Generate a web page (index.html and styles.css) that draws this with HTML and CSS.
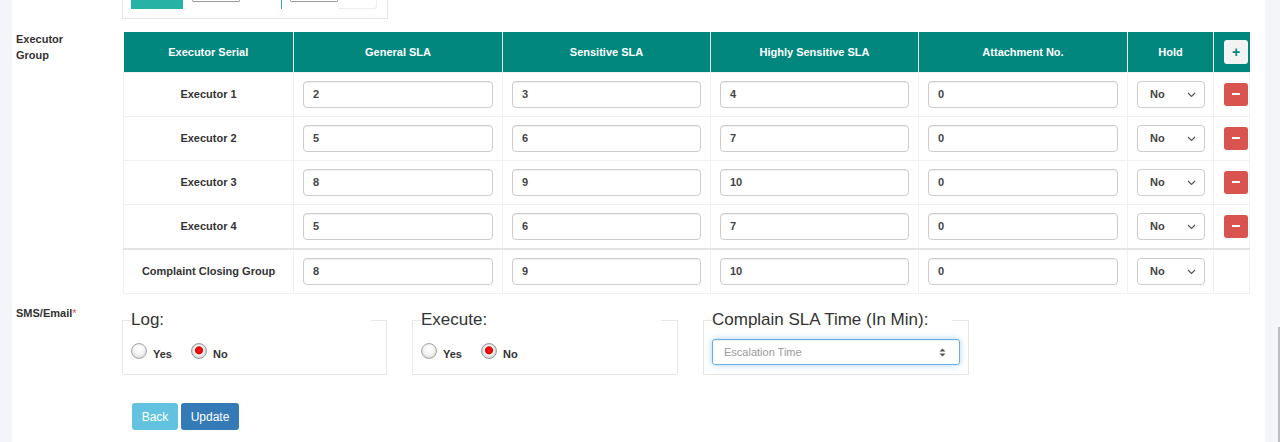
FILE: index.html
```html
<!DOCTYPE html>
<html>
<head>
<meta charset="utf-8">
<link rel="stylesheet" href="styles.css">
</head>
<body>
<div class="page">
  <div class="panel">
    <div class="prev-row">
      <div class="prev-box">
        <div class="tab-active"></div>
        <div class="mini-input"></div>
        <div class="vline"></div>
        <div class="mini-input second"></div>
        <div class="inner-edge"></div>
      </div>
    </div>

    <div class="form-row exec-row">
      <div class="row-label">Executor<br>Group</div>
      <table class="exec-table">
        <colgroup>
          <col class="c-serial"><col class="c-sla"><col class="c-sla2"><col class="c-sla2"><col class="c-sla"><col class="c-hold"><col class="c-act">
        </colgroup>
        <thead>
          <tr>
            <th>Executor Serial</th>
            <th>General SLA</th>
            <th>Sensitive SLA</th>
            <th>Highly Sensitive SLA</th>
            <th>Attachment No.</th>
            <th>Hold</th>
            <th class="act"><span class="btn-plus">+</span></th>
          </tr>
        </thead>
        <tbody>
          <tr>
            <td class="name">Executor 1</td>
            <td><div class="inp">2</div></td>
            <td><div class="inp">3</div></td>
            <td><div class="inp">4</div></td>
            <td><div class="inp">0</div></td>
            <td><div class="sel">No<svg class="chev" width="9" height="6" viewBox="0 0 9 6"><path d="M1 1l3.5 3.5L8 1" fill="none" stroke="#555" stroke-width="1.2"/></svg></div></td>
            <td class="act"><span class="btn-minus"></span></td>
          </tr>
          <tr>
            <td class="name">Executor 2</td>
            <td><div class="inp">5</div></td>
            <td><div class="inp">6</div></td>
            <td><div class="inp">7</div></td>
            <td><div class="inp">0</div></td>
            <td><div class="sel">No<svg class="chev" width="9" height="6" viewBox="0 0 9 6"><path d="M1 1l3.5 3.5L8 1" fill="none" stroke="#555" stroke-width="1.2"/></svg></div></td>
            <td class="act"><span class="btn-minus"></span></td>
          </tr>
          <tr>
            <td class="name">Executor 3</td>
            <td><div class="inp">8</div></td>
            <td><div class="inp">9</div></td>
            <td><div class="inp">10</div></td>
            <td><div class="inp">0</div></td>
            <td><div class="sel">No<svg class="chev" width="9" height="6" viewBox="0 0 9 6"><path d="M1 1l3.5 3.5L8 1" fill="none" stroke="#555" stroke-width="1.2"/></svg></div></td>
            <td class="act"><span class="btn-minus"></span></td>
          </tr>
          <tr>
            <td class="name">Executor 4</td>
            <td><div class="inp">5</div></td>
            <td><div class="inp">6</div></td>
            <td><div class="inp">7</div></td>
            <td><div class="inp">0</div></td>
            <td><div class="sel">No<svg class="chev" width="9" height="6" viewBox="0 0 9 6"><path d="M1 1l3.5 3.5L8 1" fill="none" stroke="#555" stroke-width="1.2"/></svg></div></td>
            <td class="act"><span class="btn-minus"></span></td>
          </tr>
          <tr class="closing">
            <td class="name">Complaint Closing Group</td>
            <td><div class="inp">8</div></td>
            <td><div class="inp">9</div></td>
            <td><div class="inp">10</div></td>
            <td><div class="inp">0</div></td>
            <td><div class="sel">No<svg class="chev" width="9" height="6" viewBox="0 0 9 6"><path d="M1 1l3.5 3.5L8 1" fill="none" stroke="#555" stroke-width="1.2"/></svg></div></td>
            <td class="act"></td>
          </tr>
        </tbody>
      </table>
    </div>

    <div class="form-row sms-row">
      <div class="row-label">SMS/Email<span class="req">*</span></div>
      <div class="field-grid">
        <fieldset class="fs">
          <legend>Log:</legend>
          <div class="radios">
            <span class="radio"></span><span class="rlabel">Yes</span>
            <span class="radio checked"></span><span class="rlabel">No</span>
          </div>
        </fieldset>
        <fieldset class="fs">
          <legend>Execute:</legend>
          <div class="radios">
            <span class="radio"></span><span class="rlabel">Yes</span>
            <span class="radio checked"></span><span class="rlabel">No</span>
          </div>
        </fieldset>
        <fieldset class="fs">
          <legend>Complain SLA Time (In Min):</legend>
          <div class="num-input">
            <span class="ph">Escalation Time</span>
            <svg class="spin" width="7" height="9" viewBox="0 0 7 9"><path d="M3.5 0.5L6.5 3.5H0.5Z M3.5 8.5L6.5 5.5H0.5Z" fill="#555"/></svg>
          </div>
        </fieldset>
      </div>
    </div>

    <div class="actions">
      <span class="btn btn-back">Back</span>
      <span class="btn btn-update">Update</span>
    </div>
  </div>
  <div class="scroll-thumb"></div>
</div>
</body>
</html>
```

FILE: styles.css
```css
* { box-sizing: border-box; }
html, body { margin: 0; padding: 0; }
body {
  font-family: "Liberation Sans", Arial, sans-serif;
  color: #333;
  background: #f4f5f8;
  width: 1280px;
  height: 442px;
  overflow: hidden;
}
.page {
  position: relative;
  height: 442px;
  padding-left: 12px;
}
.panel {
  width: 1253px;
  height: 442px;
  background: #fff;
}
.scroll-thumb {
  position: absolute;
  right: 0;
  top: 327px;
  width: 2px;
  height: 115px;
  background: #bdbdbd;
}

/* previous row remnant */
.prev-row { height: 18px; }
.prev-box {
  margin-left: 110px;
  width: 266px;
  height: 19px;
  border: 1px solid #e4e4e4;
  border-top: none;
  display: flex;
  align-items: flex-start;
  padding-left: 8px;
}
.tab-active { width: 52px; height: 9px; background: #26b2a5; }
.mini-input {
  margin-left: 9px;
  width: 48px;
  height: 2px;
  border: 1px solid #9a9a9a;
  border-top: none;
  border-radius: 0 0 3px 3px;
}
.vline { margin-left: 41px; width: 1px; height: 9px; background: #3aa89d; }
.mini-input.second { margin-left: 8px; }
.inner-edge {
  width: 39px;
  height: 9px;
  border-right: 1px solid #eee;
  border-bottom: 1px solid #eee;
  border-radius: 0 0 3px 0;
}

/* form rows */
.form-row { display: flex; align-items: flex-start; }
.row-label {
  width: 111px;
  flex: none;
  padding-left: 4px;
  font-size: 11px;
  font-weight: bold;
  line-height: 16px;
  color: #333;
}
.req { color: #d9534f; font-weight: normal; }

.exec-row { margin-top: 14px; }
.exec-row .row-label { padding-top: -1px; margin-top: -1px; }

.exec-table {
  width: 1126px;
  table-layout: fixed;
  border-collapse: collapse;
  font-size: 11px;
}
.c-serial { width: 170px; }
.c-sla { width: 209px; }
.c-sla2 { width: 208px; }
.c-hold { width: 86px; }
.c-act { width: 36px; }

.exec-table th {
  background: #01877e;
  color: #fff;
  font-weight: bold;
  height: 40px;
  padding: 0;
  text-align: center;
  border-left: 1px solid #e6f4f2;
}
.exec-table th:first-child { border-left: none; }
.exec-table th.act { text-align: left; padding-left: 10px; }
.btn-plus {
  display: flex;
  align-items: center;
  justify-content: center;
  width: 24px;
  height: 24px;
  background: #f2f3f3;
  border-radius: 3px;
  color: #01877e;
  font-size: 14px;
  font-weight: bold;
  line-height: 1;
}

.exec-table td {
  border: 1px solid #f1f1f1;
  padding: 8px 9px;
  height: 44px;
  vertical-align: middle;
}
.exec-table td.name {
  text-align: center;
  font-weight: bold;
  color: #333;
}
.exec-table td.act { padding-left: 10px; padding-right: 2px; }
.exec-table tr.closing td { border-top: 2px solid #e3e3e3; height: 45px; }

.inp {
  height: 27px;
  border: 1px solid #ccc;
  border-radius: 4px;
  padding: 0 9px;
  font-weight: bold;
  font-size: 11px;
  color: #444;
  line-height: 25px;
  box-shadow: inset 0 1px 1px rgba(0,0,0,.06);
}
.sel {
  width: 68px;
  height: 27px;
  border: 1px solid #ccc;
  border-radius: 4px;
  padding: 0 8px 0 12px;
  display: flex;
  align-items: center;
  justify-content: space-between;
  font-weight: bold;
  font-size: 11px;
  color: #444;
}
.chev { display: block; margin-top: 1px; }
.btn-minus {
  display: flex;
  align-items: center;
  justify-content: center;
  width: 24px;
  height: 23px;
  background: #d9534f;
  border-radius: 3px;
}
.btn-minus::before {
  content: "";
  width: 8px;
  height: 2px;
  background: #fff;
}

/* sms row */
.sms-row { margin-top: 11px; }
.field-grid {
  display: grid;
  grid-template-columns: 265px 266px 266px;
  column-gap: 25px;
  margin-left: -1px;
  padding-top: 5px;
}
.fs {
  margin: 0;
  min-width: 0;
  padding: 0 8px 9px;
  border: 1px solid #e6e6e6;
}
.fs legend {
  width: 240px;
  padding: 0;
  font-size: 17px;
  line-height: 20px;
  color: #333;
}
.radios {
  display: flex;
  align-items: center;
  height: 16px;
  margin-top: 13px;
  margin-bottom: 6px;
}
.radio {
  width: 16px;
  height: 16px;
  flex: none;
  border-radius: 50%;
  border: 1px solid #a9a9a9;
  background: radial-gradient(circle at 50% 35%, #ffffff 0%, #f4f4f4 45%, #d2d2d2 100%);
  box-shadow: inset 0 0 1px rgba(0,0,0,.2);
  position: relative;
}
.radio.checked {
  border-color: #9a9a9a;
  background: radial-gradient(circle at 50% 45%, #ff1a1a 0, #e40000 3.5px, #f4f4f4 4.5px, #e6e6e6 6px, #cfcfcf 100%);
}
.rlabel {
  font-size: 11px;
  font-weight: bold;
  color: #333;
  padding-top: 6px;
  margin-left: 6px;
  margin-right: 19px;
}
.num-input {
  margin-top: 9px;
  height: 26px;
  border: 1px solid #66afe9;
  border-radius: 3px;
  box-shadow: inset 0 1px 1px rgba(0,0,0,.075), 0 0 6px rgba(102,175,233,.55);
  display: flex;
  align-items: center;
  justify-content: space-between;
  padding: 0 13px 0 11px;
}
.ph { font-size: 11px; color: #9a9a9a; }
.spin { display: block; }

/* buttons */
.actions {
  margin-top: 28px;
  margin-left: 120px;
  display: flex;
  gap: 3px;
}
.btn {
  height: 27px;
  border-radius: 3px;
  color: #fff;
  font-size: 12px;
  display: flex;
  align-items: center;
  justify-content: center;
}
.btn-back { width: 46px; background: #63c2e0; }
.btn-update { width: 58px; background: #337ab7; }
```
